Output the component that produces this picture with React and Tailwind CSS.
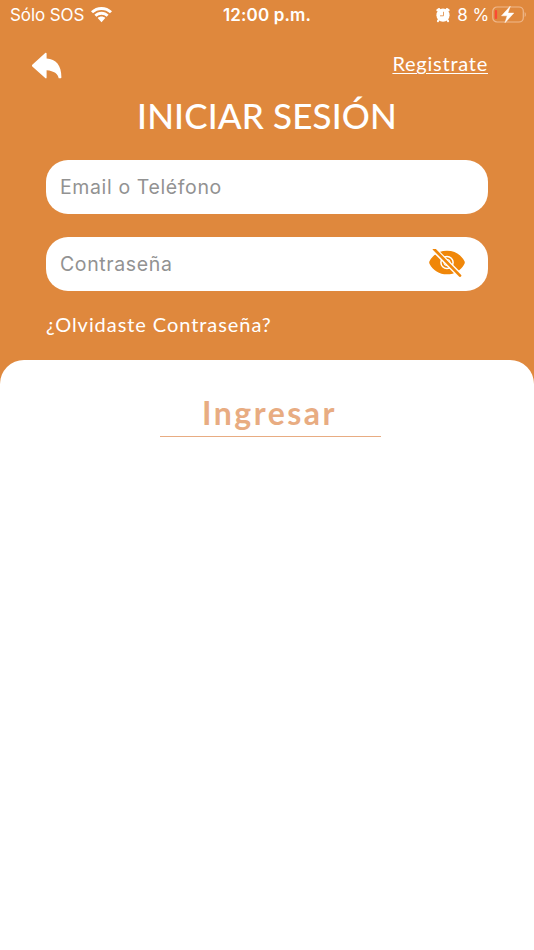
import React, { useState } from 'react';

const WifiIcon = () => (
  <svg className="ml-[6px] h-4 w-[21px]" viewBox="0 0 21 16" fill="white">
    <path d="M10.5 0C6.5 0 2.9 1.5 0 4.2L2 6.3C4.300 4.200 7.200 3 10.500 3s6.200 1.200 8.500 3.300l2-2.100C18.100 1.500 14.500 0 10.500 0z" />
    <path d="M10.500 4.800c-2.700 0-5.200 1-7.100 2.900l2 2.100c1.400-1.300 3.100-2.100 5.100-2.100s3.700.8 5.100 2.100l2-2.100c-1.900-1.900-4.400-2.900-7.100-2.900z" />
    <path d="M10.500 9.600c-1.500 0-2.800.5-3.800 1.500l3.800 4.100 3.800-4.100c-1-1-2.300-1.500-3.800-1.500z" />
  </svg>
);

const AlarmIcon = () => (
  <svg className="h-[15px] w-[14px]" viewBox="0 0 14 15" fill="none">
    <circle cx="7" cy="7.200" r="6.600" fill="white" />
    <path d="M1.500 2.200 3 1.200M12.500 2.200 11 1.200" stroke="white" strokeWidth="2.400" strokeLinecap="round" />
    <path d="M2.700 11.900 1.900 13.100M11.300 11.900l.8 1.200" stroke="white" strokeWidth="2" strokeLinecap="round" />
    <path d="M7.500 3.800v4H4" stroke="#df883d" strokeWidth=".8" />
  </svg>
);

const BatteryIcon = () => (
  <svg className="ml-[3px] h-[18px] w-[35px]" viewBox="0 0 35 18" fill="none">
    <rect x=".8" y="1" width="30.500" height="15" rx="4.300" stroke="#efb88c" strokeWidth="1.200" />
    <path d="M32.700 6c1.500.7 1.500 4.300 0 5z" fill="#efb88c" />
    <rect x="2.800" y="4" width="2.300" height="9" rx="1" fill="#fb4934" />
    <path d="M18.200.3 9.500 9.800h5.700L13 16.700l8.800-9.600h-5.900z" fill="white" stroke="white" strokeWidth=".5" />
  </svg>
);

const BackIcon = () => (
  <svg className="h-[27px] w-[30px]" viewBox="0 0 30 27" fill="white">
    <path d="M.3 12.800 13.200 1c.7-.6 1.400-.3 1.400.6v5C24 7.100 29.400 13.500 29.400 25.200c0 .7-.4 1.100-1 1.100h-1.700c-.7-4.600-4.500-7.400-12.100-8.100v7.300c0 .9-.7 1.200-1.400.6L.3 14.400c-.5-.5-.5-1.100 0-1.600z" />
  </svg>
);

const EyeOffIcon = () => (
  <svg className="h-7 w-9" viewBox="0 0 36 28" fill="none">
    <path d="M.5 12.300C4 5.500 10.300 1.700 18 1.700S32 5.500 35.500 12.300c.4.800.4 1.600 0 2.400C32 21.500 25.700 25.300 18 25.300S4 21.500.5 14.700c-.4-.8-.4-1.600 0-2.400z" fill="#f08709" />
    <circle cx="18" cy="13.500" r="6.100" stroke="white" strokeWidth="1.500" />
    <circle cx="18" cy="13.500" r="3.200" stroke="white" strokeWidth="1" />
    <path d="m3-1.500 29 29" stroke="white" strokeWidth="5.400" />
    <path d="m5 0 26 26.600" stroke="#f08709" strokeWidth="2.700" strokeLinecap="round" />
  </svg>
);

const StatusBar = () => (
  <div className="grid h-[30px] grid-cols-[1fr_auto_1fr] items-center pr-[7px] pl-[10px] font-['Inter',sans-serif] text-[17px] text-white">
    <div className="flex items-center">
      <span className="w-[75px] pt-0.5 whitespace-nowrap tracking-[-0.1px]">Sólo SOS</span>
      <WifiIcon />
    </div>
    <span className="-ml-[3px] pt-0.5 text-[17px] font-semibold tracking-[0.15px]">12:00 p.m.</span>
    <div className="flex items-center justify-end">
      <AlarmIcon />
      <span className="ml-[7px] pt-0.5 tracking-[-0.1px]">8 %</span>
      <BatteryIcon />
    </div>
  </div>
);

const inputStyle =
  "h-[54px] w-full rounded-[22px] bg-white px-[14px] font-['Inter',sans-serif] text-[19.5px] tracking-[0.62px] text-gray-700 outline-none placeholder:text-[#929292]";

const App = () => {
  const [email, setEmail] = useState('');
  const [password, setPassword] = useState('');
  const [showPassword, setShowPassword] = useState(false);

  return (
    <div className="h-[950px] w-full overflow-hidden bg-[#df883d] font-['Lato',sans-serif]">
      <StatusBar />

      <header className="flex h-[60px] items-start justify-between pr-[46px] pl-8">
        <button type="button" aria-label="Volver" className="mt-[22px]">
          <BackIcon />
        </button>
        <a href="#registro" className="mt-[19px] text-[20px] leading-[28px] tracking-[0.75px] text-white underline decoration-1 underline-offset-[2px]">
          Registrate
        </a>
      </header>

      <h1 className="mt-[2px] text-center text-[35px] leading-[46px] font-medium tracking-[0.15px] text-white">INICIAR SESIÓN</h1>

      <form className="mt-[22px] px-[46px]">
        <input
          type="text"
          className={inputStyle}
          placeholder="Email o Teléfono"
          value={email}
          onChange={(e) => setEmail(e.target.value)}
        />
        <div className="relative mt-[23px]">
          <input
            type={showPassword ? 'text' : 'password'}
            className={inputStyle}
            placeholder="Contraseña"
            value={password}
            onChange={(e) => setPassword(e.target.value)}
          />
          <button
            type="button"
            aria-label="Mostrar contraseña"
            className="absolute top-[12px] right-[23px]"
            onClick={() => setShowPassword(!showPassword)}
          >
            <EyeOffIcon />
          </button>
        </div>
        <a href="#recuperar" className="mt-[18px] block text-[20px] leading-[30px] tracking-[0.94px] text-white">
          ¿Olvidaste Contraseña?
        </a>
      </form>

      {/* Panel inferior */}
      <main className="mt-[21px] flex h-[590px] justify-center rounded-t-[24px] bg-white pl-1.5">
        <button type="button" className="mt-[31px] h-[46px] w-[221px] border-b-[1.5px] border-[#e8ac82] pr-px pb-[2px] text-[32px] leading-[42px] font-bold tracking-[2.5px] text-[#e8ac82]">
          Ingresar
        </button>
      </main>
    </div>
  );
};

export default App;
